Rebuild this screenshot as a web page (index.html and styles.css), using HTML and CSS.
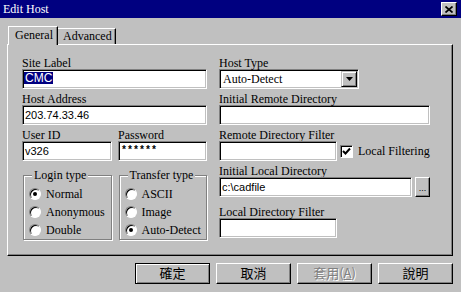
FILE: index.html
```html
<!DOCTYPE html>
<html>
<head>
<meta charset="utf-8">
<link rel="stylesheet" href="styles.css">
</head>
<body>
<div class="dialog">
  <div class="titlebar">
    <span class="title">Edit Host</span>
    <span class="close"><svg width="8" height="7" viewBox="0 0 8 7"><path d="M0.5 0.5 L7.5 6.5 M7.5 0.5 L0.5 6.5" stroke="#000" stroke-width="1.7" fill="none"/></svg></span>
  </div>
  <div class="tabs">
    <div class="tab active">General</div>
    <div class="tab">Advanced</div>
  </div>
  <div class="panel">
    <div class="col">
      <div class="field">
        <div class="label">Site Label</div>
        <div class="input"><span class="sel">CMC</span></div>
      </div>
      <div class="field">
        <div class="label">Host Address</div>
        <div class="input">203.74.33.46</div>
      </div>
      <div class="pair">
        <div class="field uid">
          <div class="label">User ID</div>
          <div class="input">v326</div>
        </div>
        <div class="field pwd">
          <div class="label">Password</div>
          <div class="input pw">******</div>
        </div>
      </div>
      <div class="groups">
        <fieldset class="group login">
          <legend>Login type</legend>
          <div class="radios">
            <div class="radio-row"><span class="radio on"></span>Normal</div>
            <div class="radio-row"><span class="radio"></span>Anonymous</div>
            <div class="radio-row"><span class="radio"></span>Double</div>
          </div>
        </fieldset>
        <fieldset class="group transfer">
          <legend>Transfer type</legend>
          <div class="radios">
            <div class="radio-row"><span class="radio"></span>ASCII</div>
            <div class="radio-row"><span class="radio"></span>Image</div>
            <div class="radio-row"><span class="radio on"></span>Auto-Detect</div>
          </div>
        </fieldset>
      </div>
    </div>
    <div class="col">
      <div class="field">
        <div class="label">Host Type</div>
        <div class="combo">
          <span class="combo-text">Auto-Detect</span>
          <span class="drop"><svg width="7" height="4" viewBox="0 0 7 4"><path d="M0 0 H7 L3.5 4 Z" fill="#000"/></svg></span>
        </div>
      </div>
      <div class="field">
        <div class="label">Initial Remote Directory</div>
        <div class="input"></div>
      </div>
      <div class="field">
        <div class="label">Remote Directory Filter</div>
        <div class="row">
          <div class="input filter"></div>
          <span class="check"><svg width="9" height="9" viewBox="0 0 9 9"><path d="M1 4 L3.5 6.5 L8 1.5" stroke="#000" stroke-width="2" fill="none"/></svg></span>
          <span class="check-label">Local Filtering</span>
        </div>
      </div>
      <div class="field">
        <div class="label">Initial Local Directory</div>
        <div class="row">
          <div class="input localdir">c:\cadfile</div>
          <span class="browse">...</span>
        </div>
      </div>
      <div class="field lfilter">
        <div class="label">Local Directory Filter</div>
        <div class="input filter"></div>
      </div>
    </div>
  </div>
  <div class="buttons">
    <span class="btn default">確定</span>
    <span class="btn">取消</span>
    <span class="btn disabled">套用(<u>A</u>)</span>
    <span class="btn">說明</span>
  </div>
</div>
</body>
</html>
```

FILE: styles.css
```css
html, body {
  margin: 0;
  padding: 0;
}
body {
  width: 461px;
  height: 292px;
  overflow: hidden;
  background: #c0c0c0;
  font-family: "Liberation Serif", serif;
  font-size: 12px;
  color: #000;
}
.dialog {
  width: 461px;
  height: 292px;
}
.titlebar {
  height: 18px;
  background: #000080;
  color: #fff;
  display: flex;
  align-items: center;
  justify-content: space-between;
  padding: 0 4px 0 3px;
}
.title {
  line-height: 18px;
}
.close {
  width: 16px;
  height: 14px;
  box-sizing: border-box;
  background: #c0c0c0;
  border: 1px solid;
  border-color: #fff #000 #000 #fff;
  box-shadow: inset -1px -1px #808080;
  display: flex;
  align-items: center;
  justify-content: center;
}
.close svg {
  display: block;
}
.tabs {
  display: flex;
  align-items: flex-end;
  margin: 8px 0 0 8px;
  height: 18px;
}
.tab {
  box-sizing: border-box;
  background: #c0c0c0;
  border-top: 1px solid #fff;
  border-right: 1px solid #000;
  box-shadow: inset -1px 0 #808080;
  padding-left: 6px;
  line-height: 14px;
}
.tab.active {
  width: 50px;
  height: 19px;
  margin-bottom: -1px;
  border-left: 1px solid #fff;
  padding-top: 1px;
  position: relative;
  z-index: 1;
}
.tab:not(.active) {
  width: 58px;
  height: 16px;
  padding-left: 5px;
}
.panel {
  margin-left: 7px;
  width: 446px;
  height: 212px;
  box-sizing: border-box;
  border: 1px solid;
  border-color: #fff #000 #000 #fff;
  box-shadow: inset -1px -1px #808080;
  padding: 12px 0 0 14px;
  display: grid;
  grid-template-columns: 185px 211px;
  column-gap: 12px;
  align-items: start;
}
.col {
  display: flex;
  flex-direction: column;
}
.field {
  margin-bottom: 4px;
}
.label {
  height: 12px;
  line-height: 12px;
  white-space: nowrap;
}
.input {
  height: 20px;
  box-sizing: border-box;
  background: #fff;
  border: 1px solid;
  border-color: #808080 #fff #fff #808080;
  box-shadow: inset 1px 1px #000, inset -1px -1px #c0c0c0;
  font-family: "Liberation Sans", sans-serif;
  font-size: 11px;
  line-height: 16px;
  padding: 1px 0 0 2px;
  white-space: nowrap;
  overflow: hidden;
}
.input.pw {
  font-family: "Liberation Mono", monospace;
  font-size: 10px;
  font-weight: bold;
  line-height: 15px;
}
.sel {
  display: inline-block;
  background: #000080;
  color: #fff;
  font-size: 12px;
  line-height: 12px;
  padding: 0 1px;
  margin-top: 1px;
  vertical-align: top;
  margin-left: -1px;
}
.pair {
  display: flex;
  gap: 6px;
}
.uid {
  width: 90px;
}
.pwd {
  width: 89px;
}
.groups {
  display: flex;
  gap: 7px;
  margin-top: 4px;
  margin-left: 1px;
}
.group {
  margin: 0;
  width: 89px;
  box-sizing: border-box;
  min-width: 0;
  padding: 0 0 0 5px;
  border: 1px solid #808080;
  box-shadow: inset 1px 1px #fff, 1px 1px #fff;
}
.group legend {
  padding: 0 2px;
  margin-left: 3px;
  line-height: 12px;
  background: #c0c0c0;
  white-space: nowrap;
}
.radios {
  padding-top: 4px;
}
.radio-row {
  display: flex;
  align-items: center;
  height: 18px;
  white-space: nowrap;
}
.radio {
  width: 12px;
  height: 12px;
  box-sizing: border-box;
  border-radius: 50%;
  background: #fff;
  border: 1px solid;
  border-color: #808080 #fff #fff #808080;
  box-shadow: inset 1px 1px #000;
  margin-right: 5px;
  display: flex;
  align-items: center;
  justify-content: center;
  flex: none;
}
.radio.on::after {
  content: "";
  width: 4px;
  height: 4px;
  border-radius: 50%;
  background: #000;
}
.combo {
  width: 140px;
  height: 20px;
  box-sizing: border-box;
  background: #fff;
  border: 1px solid;
  border-color: #808080 #fff #fff #808080;
  box-shadow: inset 1px 1px #000, inset -1px -1px #c0c0c0;
  display: flex;
  align-items: center;
  justify-content: space-between;
  padding: 1px;
}
.combo-text {
  padding-left: 2px;
  line-height: 16px;
}
.drop {
  width: 16px;
  height: 16px;
  box-sizing: border-box;
  background: #c0c0c0;
  border: 1px solid;
  border-color: #c0c0c0 #000 #000 #c0c0c0;
  box-shadow: inset 1px 1px #fff, inset -1px -1px #808080;
  display: flex;
  align-items: center;
  justify-content: center;
}
.drop svg {
  display: block;
}
.row {
  display: flex;
  align-items: center;
}
.filter {
  width: 118px;
}
.check {
  width: 13px;
  height: 13px;
  box-sizing: border-box;
  background: #fff;
  border: 1px solid;
  border-color: #808080 #fff #fff #808080;
  box-shadow: inset 1px 1px #000;
  margin-left: 3px;
  display: flex;
  align-items: center;
  justify-content: center;
}
.check svg {
  display: block;
}
.check-label {
  margin-left: 5px;
  white-space: nowrap;
}
.localdir {
  width: 193px;
}
.browse {
  width: 15px;
  height: 20px;
  box-sizing: border-box;
  margin-left: 3px;
  border: 1px solid;
  border-color: #fff #000 #000 #fff;
  box-shadow: inset -1px -1px #808080;
  font-family: "Liberation Sans", sans-serif;
  font-size: 9px;
  line-height: 20px;
  text-align: center;
}
.lfilter {
  margin-top: 5px;
}
.buttons {
  display: flex;
  justify-content: flex-end;
  gap: 6px;
  padding-right: 8px;
  margin-top: 7px;
}
.btn {
  width: 75px;
  height: 21px;
  box-sizing: border-box;
  border: 1px solid;
  border-color: #fff #000 #000 #fff;
  box-shadow: inset -1px -1px #808080;
  font-family: "Noto Sans CJK TC", sans-serif;
  font-size: 13px;
  line-height: 18px;
  text-align: center;
}
.btn.default {
  border-color: #000;
  box-shadow: inset 1px 1px #fff, inset -1px -1px #808080;
}
.btn.disabled {
  color: #808080;
  text-shadow: 1px 1px #fff;
}
```
